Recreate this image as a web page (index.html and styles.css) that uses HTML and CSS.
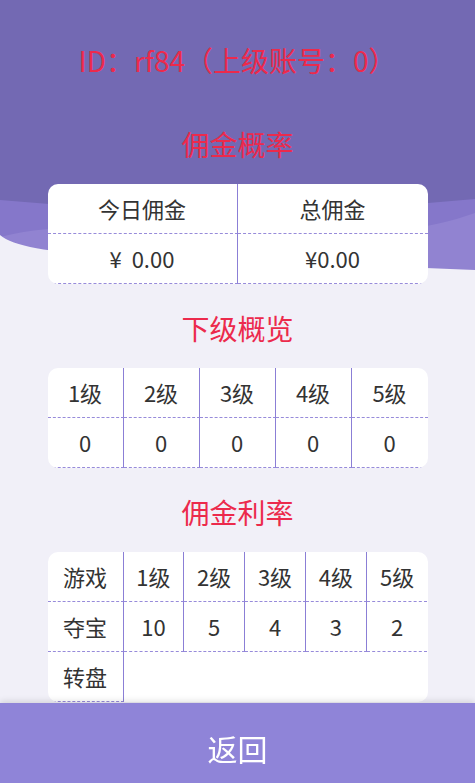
FILE: index.html
```html
<!DOCTYPE html>
<html lang="zh-CN">
<head>
    <meta charset="UTF-8">
    <meta name="viewport" content="width=device-width, initial-scale=1.0">
    <title>我的推广</title>
    <link rel="stylesheet" href="styles.css">
</head>
<body>

<!-- purple banner with the two waves under the top content -->
<div class="banner">
    <svg viewBox="0 0 475 300" preserveAspectRatio="none" width="100%" height="100%">
        <rect x="0" y="0" width="475" height="300" fill="#7369b3"/>
        <path d="M0,200 Q237,222 475,199 L475,300 L0,300 Z" fill="#8577ca"/>
        <path d="M0,237 C120,205 330,265 475,213 L475,300 L0,300 Z" fill="#9183d1"/>
        <path d="M0,235 C30,262 200,258 475,270 L475,300 L0,300 Z" fill="#f1f0f8"/>
    </svg>
</div>

<main class="page">
    <p class="user-id">ID：rf84（上级账号：0）</p>

    <h2 class="section-title">佣金概率</h2>
    <div class="card cols-2">
        <div class="cell sep">今日佣金</div>
        <div class="cell">总佣金</div>
        <div class="cell sep">¥&nbsp; 0.00</div>
        <div class="cell">¥0.00</div>
    </div>

    <h2 class="section-title">下级概览</h2>
    <div class="card cols-5">
        <div class="cell sep">1级</div>
        <div class="cell sep">2级</div>
        <div class="cell sep">3级</div>
        <div class="cell sep">4级</div>
        <div class="cell">5级</div>
        <div class="cell sep">0</div>
        <div class="cell sep">0</div>
        <div class="cell sep">0</div>
        <div class="cell sep">0</div>
        <div class="cell">0</div>
    </div>

    <h2 class="section-title">佣金利率</h2>
    <div class="card cols-rate">
        <div class="cell sep">游戏</div>
        <div class="cell sep">1级</div>
        <div class="cell sep">2级</div>
        <div class="cell sep">3级</div>
        <div class="cell sep">4级</div>
        <div class="cell">5级</div>
        <div class="cell sep">夺宝</div>
        <div class="cell sep">10</div>
        <div class="cell sep">5</div>
        <div class="cell sep">4</div>
        <div class="cell sep">3</div>
        <div class="cell">2</div>
        <div class="cell sep">转盘</div>
    </div>
</main>

<footer class="back-bar">返回</footer>

</body>
</html>
```

FILE: styles.css
```css
body {
    font-family: "Noto Sans CJK SC", "Open Sans", sans-serif;
    margin: 0;
    padding: 0;
    background-color: #f1f0f8;
    color: #333;
}
.banner {
    position: absolute;
    top: 0;
    left: 0;
    width: 100%;
    height: 300px;
    z-index: 0;
}
.banner svg {
    display: block;
}
.page {
    position: relative;
    z-index: 1;
    padding: 20px 0 90px;
}
.user-id {
    margin: 0;
    line-height: 80px;
    font-size: 28px;
    color: #ec2a4c;
    text-align: center;
}
.section-title {
    margin: 4px 0 0;
    line-height: 80px;
    font-size: 28px;
    font-weight: normal;
    color: #ec2a4c;
    text-align: center;
}
.card {
    width: 380px;
    margin: 0 auto;
    background-color: white;
    border-radius: 10px;
    overflow: hidden;
    display: grid;
}
.cols-2 {
    grid-template-columns: 1fr 1fr;
}
.cols-5 {
    grid-template-columns: repeat(5, 1fr);
}
.cols-rate {
    grid-template-columns: 76px repeat(5, 1fr);
}
.cell {
    height: 49px;
    line-height: 49px;
    text-align: center;
    font-size: 22px;
    color: #333;
    border-bottom: 1px dashed #978bda;
}
.cell.sep {
    border-right: 1px solid #8b7fd6;
}
.back-bar {
    position: fixed;
    left: 0;
    right: 0;
    bottom: 0;
    height: 70px;
    padding-top: 10px;
    line-height: 70px;
    text-align: center;
    font-size: 30px;
    color: white;
    background-color: #8f84d8;
    box-shadow: 0 -2px 6px rgba(0, 0, 0, 0.12);
    z-index: 2;
}
```
